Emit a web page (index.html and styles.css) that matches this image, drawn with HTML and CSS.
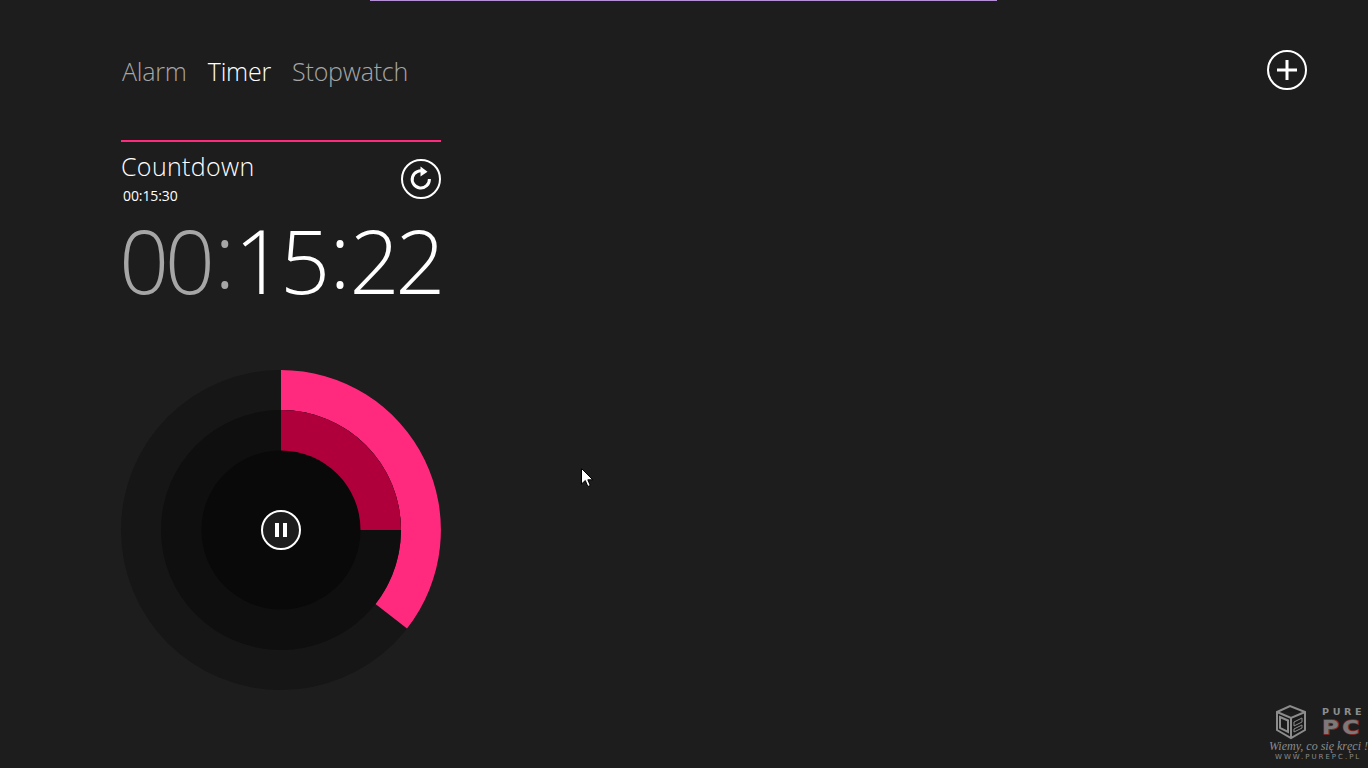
FILE: index.html
```html
<!DOCTYPE html>
<html lang="en">

<head>
    <meta charset="UTF-8">
    <title>Timer</title>
    <link rel="stylesheet" href="styles.css">
</head>

<body>
    <div class="topLine"></div>

    <div class="header">
        <div class="tabs">
            <span class="tab">Alarm</span>
            <span class="tab active">Timer</span>
            <span class="tab">Stopwatch</span>
        </div>
        <svg class="addBtn" width="40" height="40" viewBox="0 0 40 40">
            <circle cx="20" cy="20" r="19" fill="none" stroke="#fff" stroke-width="2" />
            <path d="M10 20H30M20 10V30" fill="none" stroke="#fff" stroke-width="3" />
        </svg>
    </div>

    <div class="timerCard">
        <div class="cardTop">
            <div>
                <div class="cardName">Countdown</div>
                <div class="cardTotal">00:15:30</div>
            </div>
            <svg class="resetBtn" width="40" height="40" viewBox="0 0 40 40">
                <circle cx="20" cy="20" r="19" fill="none" stroke="#fff" stroke-width="2" />
                <path d="M23.5 12.6A8.6 8.6 0 1 0 28.4 20" fill="none" stroke="#fff" stroke-width="3" />
                <path d="M19.5 7.5L26.5 12.8L19.5 17.5Z" fill="#fff" />
            </svg>
        </div>

        <div class="clock">
            <span class="dim first">00</span><span class="dim sep">:</span><span>15</span><span class="sep">:</span><span>22</span>
        </div>

        <svg class="dial" width="320" height="320" viewBox="0 0 320 320">
            <circle cx="160" cy="160" r="160" fill="#161616" />
            <!-- seconds -->
            <path d="M160 0A160 160 0 0 1 286 258.5L254.5 233.9A120 120 0 0 0 160 40Z" fill="#ff2a7d" />
            <circle cx="160" cy="160" r="120" fill="#0f0f0f" />
            <!-- minutes -->
            <path d="M160 40A120 120 0 0 1 280 160H160Z" fill="#b0003c" />
            <circle cx="160" cy="160" r="79.500" fill="#090909" />
            <circle cx="160" cy="160" r="19" fill="#1d1d1d" stroke="#fff" stroke-width="2" />
            <path d="M156 153V167M164 153V167" fill="none" stroke="#fff" stroke-width="4" />
        </svg>
    </div>

    <svg class="cursor" width="13" height="20" viewBox="0 0 13 20">
        <path d="M.5 .5V16L4.300 12.500L6.800 18.500L9.300 17.500L6.800 11.800H11.800Z" fill="#fff" stroke="#000" />
    </svg>

    <div class="watermark">
        <svg class="wmBox" width="32" height="36" viewBox="0 0 32 36">
            <path d="M2 8L15 2L30 8V26L16 34L2 26ZM2 8L16 14L30 8M16 14V34M5 13L13 16.500V28L5 24Z" fill="#1a1a1a" stroke="#8c8c8c" stroke-width="2" />
            <path d="M19 18L27 14V18L19 22ZM19 25L27 21V24L19 28Z" fill="none" stroke="#8c8c8c" />
        </svg>
        <div class="wmBrand">
            <span class="wmPure">PURE</span>
            <span class="wmPc">PC</span>
        </div>
        <div class="wmSlogan">Wiemy, co się kręci !</div>
        <div class="wmUrl">WWW.PUREPC.PL</div>
    </div>
</body>

</html>
```

FILE: styles.css
```css
* {
    box-sizing: border-box;
    margin: 0;
    padding: 0;
}

html,
body {
    height: 768px;
    overflow: hidden;
}

body {
    background: #1d1d1d;
    color: #fff;
    font-family: "Open Sans", "Liberation Sans", sans-serif;
    position: relative;
}

.topLine {
    width: 627px;
    height: 1px;
    margin-left: 370px;
    background: #b58fd6;
}

.header {
    display: flex;
    justify-content: space-between;
    align-items: center;
    padding: 49px 61px 0 122px;
}

.tabs {
    display: flex;
    gap: 21px;
    padding-top: 2px;
    font-size: 25px;
    letter-spacing: -0.2px;
    font-weight: 300;
    color: #a6a6a6;
}

.active {
    color: #fff;
}

.timerCard {
    width: 320px;
    margin: 50px 0 0 121px;
    border-top: 2px solid #ff2a7d;
}

.cardTop {
    display: flex;
    justify-content: space-between;
    align-items: flex-start;
    padding-top: 7px;
}

.resetBtn {
    margin-top: 10px;
}

.cardName {
    font-size: 25px;
    font-weight: 350;
    letter-spacing: 0.35px;
    line-height: 34px;
}

.cardTotal {
    font-size: 14px;
    letter-spacing: -0.1px;
    line-height: 20px;
    margin: 3px 0 0 2px;
}

.clock {
    display: flex;
    justify-content: space-between;
    margin-top: 10px;
    font-size: 88px;
    font-weight: 300;
    line-height: 88px;
    letter-spacing: -4.5px;
    white-space: nowrap;
}

.first {
    margin-left: -2px;
}

.sep {
    margin-top: -6px;
    font-weight: 350;
}

.dim {
    color: #a6a6a6;
}

.dial {
    display: block;
    margin-top: 66px;
}

.cursor {
    position: absolute;
    left: 581px;
    top: 468px;
}

.watermark {
    position: absolute;
    left: 1268px;
    top: 704px;
    width: 100px;
    height: 62px;
    color: #8c8c8c;
}

.wmBox {
    position: absolute;
    left: 7px;
    top: 0;
}

.wmBrand {
    position: absolute;
    left: 54px;
    top: 2px;
    display: flex;
    flex-direction: column;
    font-family: "DejaVu Sans", sans-serif;
    line-height: 13px;
}

.wmPure {
    font-size: 8px;
    font-weight: 700;
    letter-spacing: 3px;
    transform: scaleX(1.2);
    transform-origin: left;
}

.wmPc {
    font-size: 20px;
    font-weight: 700;
    line-height: 17px;
    letter-spacing: 3px;
    color: #7a7a7a;
    -webkit-text-stroke: 1.5px #8a2a2a;
    paint-order: stroke fill;
    transform: scaleX(1.15);
    transform-origin: left;
}

.wmSlogan {
    position: absolute;
    left: 1px;
    top: 35px;
    font-family: "Liberation Serif", serif;
    font-style: italic;
    font-size: 12px;
    white-space: nowrap;
}

.wmUrl {
    position: absolute;
    left: 7px;
    top: 49px;
    font-family: "DejaVu Sans", sans-serif;
    font-size: 7px;
    letter-spacing: 2px;
    white-space: nowrap;
}
```
